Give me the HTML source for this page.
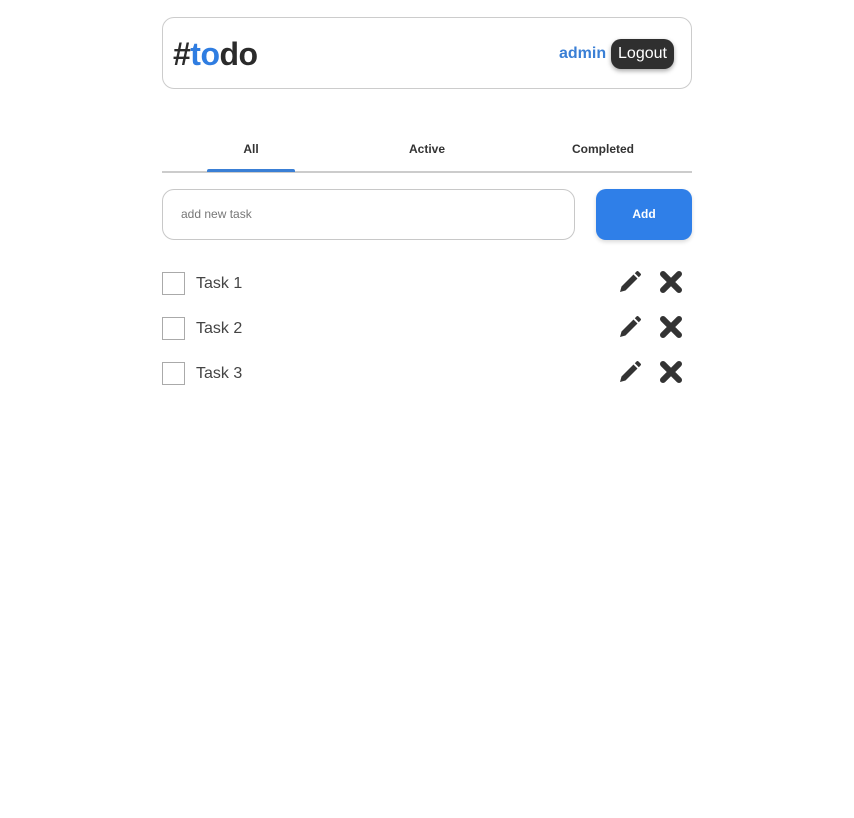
<!DOCTYPE html>
<html><head><style>
body{margin:0;background:#fff;font-family:"Liberation Sans",sans-serif;color:#333;}
.hdr{position:absolute;left:162px;top:17px;width:528px;height:70px;border:1px solid #ccc;border-radius:12px;}
.title{position:absolute;left:10px;top:18px;font-size:32px;font-weight:bold;color:#2b2b2b;letter-spacing:-0.5px}
.title span{color:#2f7de1}
.admin{position:absolute;left:396px;top:27px;font-size:16px;font-weight:bold;color:#3a7fd5}
.logout{position:absolute;left:448px;top:21px;width:63px;height:30px;background:#2f2f2f;color:#fff;border-radius:10px;font-size:16px;line-height:30px;text-align:center;box-shadow:0 2px 5px rgba(0,0,0,.35)}
.tab{position:absolute;top:142px;font-size:12px;font-weight:bold;color:#333;width:176px;text-align:center}
.line{position:absolute;left:162px;top:171px;width:530px;height:2px;background:#ccc}
.ind{position:absolute;left:207px;top:169px;width:88px;height:3px;background:#3a7fd5;border-radius:2px 2px 0 0}
.inp{position:absolute;left:162px;top:189px;width:411px;height:49px;border:1px solid #c8c8c8;border-radius:12px;font-size:12px;color:#777;line-height:49px;text-indent:18px}
.add{position:absolute;left:596px;top:189px;width:96px;height:51px;background:#2f7fe8;color:#fff;border-radius:10px;font-size:12px;font-weight:bold;text-align:center;line-height:51px;box-shadow:0 2px 4px rgba(0,0,0,.15)}
.row{position:absolute;left:162px;width:530px;height:24px}
.cb{position:absolute;left:0;top:0;width:21px;height:21px;border:1px solid #aaa;}
.tx{position:absolute;left:34px;top:3px;font-size:16px;color:#444}
.pen{position:absolute;left:456px;top:-2px}
.x{position:absolute;left:497px;top:-2px}
</style></head><body>
<div class="hdr"><div class="title">#<span>to</span>do</div><div class="admin">admin</div><div class="logout">Logout</div></div>
<div class="tab" style="left:163px">All</div>
<div class="tab" style="left:339px">Active</div>
<div class="tab" style="left:515px">Completed</div>
<div class="line"></div><div class="ind"></div>
<div class="inp">add new task</div>
<div class="add">Add</div>
<div class="row" style="top:272px"><div class="cb"></div><div class="tx">Task 1</div>
<svg class="pen" width="24" height="24" viewBox="0 0 24 24"><path fill="#333" d="M2 22l1.5-5.5L15.5 4.5l4 4L7.5 20.5zM16.8 3.2l1.7-1.7a1.4 1.4 0 0 1 2 0l2 2a1.4 1.4 0 0 1 0 2l-1.7 1.7z"/></svg>
<svg class="x" width="24" height="24" viewBox="0 0 24 24"><path stroke="#333" stroke-width="6" stroke-linecap="round" d="M4 4L20 20M20 4L4 20"/></svg></div>
<div class="row" style="top:317px"><div class="cb"></div><div class="tx">Task 2</div>
<svg class="pen" width="24" height="24" viewBox="0 0 24 24"><path fill="#333" d="M2 22l1.5-5.5L15.5 4.5l4 4L7.5 20.5zM16.8 3.2l1.7-1.7a1.4 1.4 0 0 1 2 0l2 2a1.4 1.4 0 0 1 0 2l-1.7 1.7z"/></svg>
<svg class="x" width="24" height="24" viewBox="0 0 24 24"><path stroke="#333" stroke-width="6" stroke-linecap="round" d="M4 4L20 20M20 4L4 20"/></svg></div>
<div class="row" style="top:362px"><div class="cb"></div><div class="tx">Task 3</div>
<svg class="pen" width="24" height="24" viewBox="0 0 24 24"><path fill="#333" d="M2 22l1.5-5.5L15.5 4.5l4 4L7.5 20.5zM16.8 3.2l1.7-1.7a1.4 1.4 0 0 1 2 0l2 2a1.4 1.4 0 0 1 0 2l-1.7 1.7z"/></svg>
<svg class="x" width="24" height="24" viewBox="0 0 24 24"><path stroke="#333" stroke-width="6" stroke-linecap="round" d="M4 4L20 20M20 4L4 20"/></svg></div>
</body></html>
